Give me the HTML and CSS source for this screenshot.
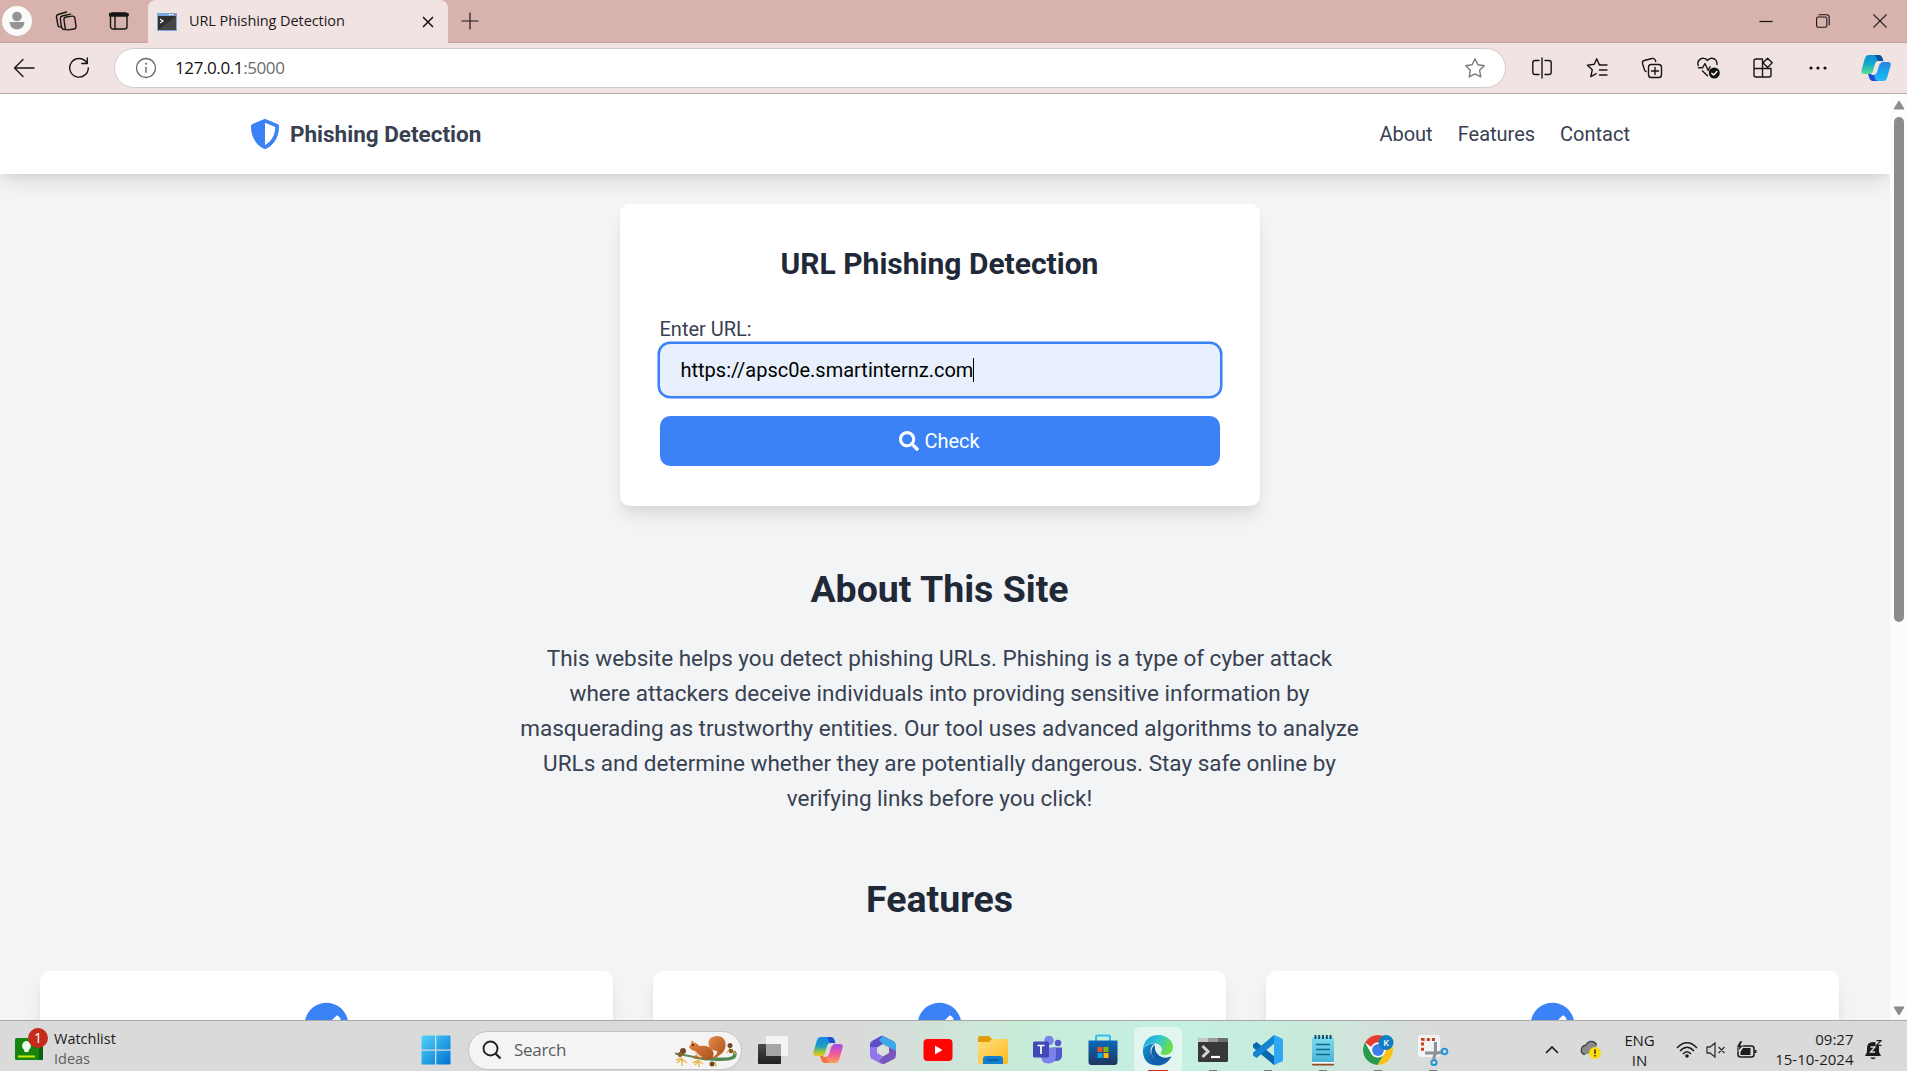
FILE: index.html
```html
<!DOCTYPE html>
<html lang="en">
<head>
<meta charset="utf-8">
<title>URL Phishing Detection</title>
<link rel="stylesheet" href="styles.css">
</head>
<body>
<svg class="defs" width="0" height="0" aria-hidden="true">
  <defs>
    <linearGradient id="win" x1="0" y1="0" x2="1" y2="1"><stop offset="0" stop-color="#4fd4fb"/><stop offset="1" stop-color="#0071d2"/></linearGradient>
    <linearGradient id="cpA" x1="0" y1="0" x2="0" y2="1"><stop offset="0" stop-color="#0b8fd6"/><stop offset=".45" stop-color="#12a9cc"/><stop offset="1" stop-color="#5be08c"/></linearGradient>
    <linearGradient id="cpB" x1="0" y1="0" x2="0" y2="1"><stop offset="0" stop-color="#2f7fe0"/><stop offset=".5" stop-color="#15a8f0"/><stop offset="1" stop-color="#22b8f5"/></linearGradient>
    <linearGradient id="cpC" x1="0" y1="0" x2="0" y2="1"><stop offset="0" stop-color="#1586e8"/><stop offset=".5" stop-color="#1f9fc0"/><stop offset=".75" stop-color="#8fc63e"/><stop offset="1" stop-color="#f5c51c"/></linearGradient>
    <linearGradient id="cpD" x1="0" y1="0" x2="0" y2="1"><stop offset="0" stop-color="#a34de8"/><stop offset=".5" stop-color="#ee5a9c"/><stop offset="1" stop-color="#fba04f"/></linearGradient>
    <linearGradient id="fold" x1="0" y1="0" x2="1" y2="1"><stop offset="0" stop-color="#ffdf7c"/><stop offset="1" stop-color="#fdbb22"/></linearGradient>
    <linearGradient id="store" x1="0" y1="0" x2="0" y2="1"><stop offset="0" stop-color="#0b69b8"/><stop offset="1" stop-color="#20355f"/></linearGradient>
    <linearGradient id="edgeA" x1="0" y1="0" x2="1" y2=".4"><stop offset="0" stop-color="#1d9de0"/><stop offset=".5" stop-color="#30c3d6"/><stop offset="1" stop-color="#6ae04c"/></linearGradient>
    <linearGradient id="edgeB" x1="0" y1="0" x2="1" y2="1"><stop offset="0" stop-color="#1592d9"/><stop offset="1" stop-color="#0c4f91"/></linearGradient>
    <linearGradient id="tv" x1="0" y1="0" x2="0" y2="1"><stop offset="0" stop-color="#4a4a48"/><stop offset="1" stop-color="#20201f"/></linearGradient>
    <linearGradient id="note" x1="0" y1="0" x2="0" y2="1"><stop offset="0" stop-color="#7fdcef"/><stop offset="1" stop-color="#45b3d8"/></linearGradient>
    <linearGradient id="sq" x1="0" y1="0" x2="1" y2="1"><stop offset="0" stop-color="#e78a48"/><stop offset="1" stop-color="#a94f1b"/></linearGradient>
    <symbol id="check-circle" viewBox="0 0 512 512"><path fill="currentColor" d="M504 256c0 136.967-111.033 248-248 248S8 392.967 8 256 119.033 8 256 8s248 111.033 248 248zM227.314 387.314l184-184c6.248-6.248 6.248-16.379 0-22.627l-22.627-22.627c-6.248-6.248-16.379-6.249-22.628 0L216 308.118l-70.059-70.059c-6.248-6.248-16.379-6.248-22.628 0l-22.627 22.627c-6.248 6.248-6.248 16.379 0 22.627l104 104c6.249 6.249 16.379 6.249 22.628.001z"/></symbol>
  </defs>
</svg>

<div class="screen">
  <!-- Tab strip -->
  <div class="tabstrip">
    <div class="slot avatar-slot"><svg width="30" height="30" viewBox="0 0 30 30"><circle cx="15" cy="15" r="15" fill="#fafafa"/><circle cx="15" cy="10.5" r="4.8" fill="#949494"/><path d="M8 16h14q.3 0 .3.600c0 4-3.200 6.900-7.300 6.900s-7.300-2.900-7.300-6.900q0-.6.300-.6z" fill="#949494"/></svg></div>
    <div class="slot workspaces"><svg class="line" width="24" height="24" viewBox="0 0 24 24"><rect x="10.500" y="7.500" width="11" height="13" rx="2.500" transform="rotate(-8 16 14)"/><path d="M7.500 18.500l-1.200-8.700q-.2-2.100 1.800-2.800l8.500-1.900M4 16.500L2.500 8.500Q2.200 6.300 4.200 5.500L12.500 3M11 20.500Q8.500 21 7.800 18.500M6 18Q4.500 18 4 16.500"/></svg></div>
    <div class="slot vtabs"><svg class="line" width="20" height="20" viewBox="0 0 20 20"><rect x="1.500" y="2" width="16.500" height="16" rx="2.500"/><path d="M1.500 3.800h16.500" stroke-width="4"/><path d="M6 4v14"/></svg></div>
    <div class="tab">
      <svg class="favicon" width="20" height="18" viewBox="0 0 20 18"><rect width="20" height="18" fill="#77a7de"/><rect x="1" y="3" width="18" height="14" fill="#2e2e2e"/><path d="M1 17L19 3v14z" fill="#444"/><path d="M3 6l3 2-3 2" stroke="#fff" stroke-width="1.200" fill="none"/><path d="M12 1.500h2M15 1.500h1" stroke="#fff"/><path d="M17 1.500h2" stroke="#d66"/></svg>
      <span class="tab-title">URL Phishing Detection</span>
      <svg class="tab-close" width="12" height="12" viewBox="0 0 12 12"><path d="M1 1l10 10M11 1L1 11" stroke="#111" stroke-width="1.500"/></svg>
    </div>
    <div class="slot newtab"><svg width="18" height="18" viewBox="0 0 18 18"><path d="M9 .5v17M.5 9h17" stroke="#1b1b1b" stroke-width="1.200"/></svg></div>
    <div class="window-controls">
      <div class="slot"><svg width="14" height="14" viewBox="0 0 14 14"><path d="M.5 7.500h13" stroke="#111" stroke-width="1.200"/></svg></div>
      <div class="slot"><svg class="line thin" width="14" height="14" viewBox="0 0 14 14"><rect x=".6" y="3" width="10.200" height="10.200" rx="1.500"/><path d="M3 .8h7.500q2.700 0 2.700 2.700v7.500"/></svg></div>
      <div class="slot"><svg width="14" height="14" viewBox="0 0 14 14"><path d="M.5.5l13 13M13.500.5l-13 13" stroke="#222" stroke-width="1.100"/></svg></div>
    </div>
  </div>

  <!-- Address bar -->
  <div class="toolbar">
    <div class="slot back"><svg class="line" width="22" height="20" viewBox="0 0 22 20"><path d="M21 10H1.500M10 1.500L1.500 10l8.500 8.500"/></svg></div>
    <div class="slot reload"><svg class="line" width="22" height="22" viewBox="0 0 22 22"><path d="M18.500 5.300A9.300 9.300 0 1 0 20.300 11M19.300 1v5.500h-5.500"/></svg></div>
    <div class="omnibox">
      <svg class="info" width="22" height="22" viewBox="0 0 22 22"><circle cx="11" cy="11" r="9.500" fill="none" stroke="#666" stroke-width="1.300"/><path d="M11 9.800v6" stroke="#666" stroke-width="1.400"/><circle cx="11" cy="6.800" r="1" fill="#666"/></svg>
      <span class="address">127.0.0.1<span class="port">:5000</span></span>
      <svg class="star" width="22" height="22" viewBox="0 0 22 22"><path d="M11 1.800l2.900 6 6.400.9-4.700 4.600 1.200 6.600-5.800-3.100-5.800 3.100 1.200-6.600L1.700 8.700l6.400-.9z" fill="none" stroke="#7b7b7b" stroke-width="1.400" stroke-linejoin="round"/></svg>
    </div>
    <div class="actions">
      <div class="slot"><svg class="line" width="22" height="22" viewBox="0 0 22 22"><path d="M8 3.500H4Q1.800 3.500 1.800 5.700v9.600Q1.800 17.500 4 17.500h4M14 3.500h4q2.200 0 2.200 2.200v9.600q0 2.200-2.200 2.200h-4M11 1v20"/></svg></div>
      <div class="slot"><svg class="line" width="22" height="22" viewBox="0 0 22 22"><path d="M14 7.800l-.8-.2L10.700 1.800 8.300 7.200l-6.900 1 4.900 4.500-1.500 7 5.400-3M13.500 8h7.500M13.500 13h7.500M13.500 18h7.500"/></svg></div>
      <div class="slot"><svg class="line" width="22" height="22" viewBox="0 0 22 22"><rect x="7.500" y="7.500" width="13" height="13" rx="2.800"/><path d="M14 10.500v7M10.500 14h7M5 14.500Q3.500 14 3.200 12L1.500 6.500Q1 4.200 3.200 3.500L11 1.500Q13.300 1 14.200 3l.5 1.500"/></svg></div>
      <div class="slot"><svg class="line" width="24" height="24" viewBox="0 0 24 24"><path d="M2.200 9.500C.8 5 4.500 1.800 7.700 2.300q2.200.2 3.800 2.200 1.800-2 3.800-2.200c4-.3 6.200 3 5.700 6.200M2.500 11.800h4L9 7.500l3.200 7 1.800-3.800M6.500 15l5 4.800"/><circle cx="18.300" cy="17" r="5.500" fill="#111" stroke="none"/><path d="M15.800 17.200l1.800 1.800 3.300-3.500" stroke="#fff"/></svg></div>
      <div class="slot"><svg class="line" width="22" height="22" viewBox="0 0 22 22"><path d="M10 2H4Q2 2 2 4v14q0 2 2 2h13q2 0 2-2v-6.500H2M10.500 2v18"/><path d="M15.600 1.200l4.600 4.600-4.600 4.600L11 5.800z"/></svg></div>
      <div class="slot"><svg width="18" height="6" viewBox="0 0 18 6"><g fill="#111"><circle cx="2" cy="3" r="1.600"/><circle cx="9" cy="3" r="1.600"/><circle cx="16" cy="3" r="1.600"/></g></svg></div>
      <div class="slot copilot"><svg width="30" height="28" viewBox="0 0 30 28"><path d="M8 1h9q3 0 4 3l1 3h-5q-2 0-3 3l-2 7q-1 3-4 3H3q-3.500 0-2.500-4L4 4q1-3 4-3z" fill="url(#cpA)"/><path d="M14 1h3.500q3 0 4 3l1 3h-5q-2-.5-2-3z" fill="#0c4f9c"/><path d="M22 8h5q3.500 0 2.500 4l-3.500 12q-1 3-4 3h-9q-3 0-4-4l4-3q1-.5 2-3l2-7q1-2 5-2z" fill="url(#cpB)"/><path d="M9 20q3 0 4-2.500 0 9.500 4 9.500h-5q-3 0-4-4l-1-3z" fill="#2049d8"/><path d="M20 8.500h-1q-3 0-4 3l-1.500 6q-.8 2.500-3 2.700h1.500q2.500 0 3.500-3l2-6.500q.5-1.800 2.500-2.200z" fill="#f1e3e2" stroke="#f1e3e2" stroke-width="1.500"/></svg></div>
    </div>
  </div>

  <!-- Web page -->
  <div class="viewport">
    <div class="page">
      <header class="site-header">
        <div class="container">
          <div class="brand"><svg width="30" height="30" viewBox="0 0 512 512"><path fill="#3b82f6" d="M466.500 83.700l-192-80a48.150 48.150 0 0 0-36.900 0l-192 80C27.700 91.100 16 108.600 16 128c0 198.500 114.500 335.700 221.500 380.300 11.800 4.900 25.100 4.900 36.900 0C360.100 472.600 496 349.300 496 128c0-19.400-11.700-36.900-29.500-44.300zM256.100 446.300l-.1-381 175.900 73.300c-3.300 151.400-82.100 261.100-175.800 307.700z"/></svg><span>Phishing Detection</span></div>
          <nav class="nav"><a>About</a><a>Features</a><a>Contact</a></nav>
        </div>
      </header>
      <main class="content">
        <section class="card">
          <h2 class="card-title">URL Phishing Detection</h2>
          <label class="label">Enter URL:</label>
          <div class="input"><span>https://apsc0e.smartinternz.com</span><i class="caret"></i></div>
          <button class="button"><svg width="20" height="20" viewBox="0 0 512 512"><path fill="currentColor" d="M505 442.700L405.300 343c-4.500-4.500-10.600-7-17-7H372c27.600-35.300 44-79.700 44-128C416 93.100 322.900 0 208 0S0 93.100 0 208s93.100 208 208 208c48.300 0 92.700-16.400 128-44v16.300c0 6.400 2.500 12.500 7 17l99.700 99.700c9.400 9.400 24.600 9.400 33.900 0l28.300-28.300c9.400-9.400 9.400-24.600.1-34zM208 336c-70.700 0-128-57.200-128-128 0-70.700 57.200-128 128-128 70.700 0 128 57.200 128 128 0 70.700-57.200 128-128 128z"/></svg><span>Check</span></button>
        </section>
        <section class="about">
          <h2 class="heading">About This Site</h2>
          <p class="lead">This website helps you detect phishing URLs. Phishing is a type of cyber attack<br>where attackers deceive individuals into providing sensitive information by<br>masquerading as trustworthy entities. Our tool uses advanced algorithms to analyze<br>URLs and determine whether they are potentially dangerous. Stay safe online by<br>verifying links before you click!</p>
        </section>
        <section class="features">
          <h2 class="heading">Features</h2>
          <div class="feature-grid">
            <div class="feature"><svg width="45" height="45"><use href="#check-circle"/></svg></div>
            <div class="feature"><svg width="45" height="45"><use href="#check-circle"/></svg></div>
            <div class="feature"><svg width="45" height="45"><use href="#check-circle"/></svg></div>
          </div>
        </section>
      </main>
    </div>
    <div class="scrollbar">
      <svg width="12" height="10" viewBox="0 0 12 10"><path d="M6 1l5 8H1z" fill="#8b8b8b" stroke="#8b8b8b" stroke-linejoin="round"/></svg>
      <div class="thumb"></div>
      <svg class="down" width="12" height="10" viewBox="0 0 12 10"><path d="M6 9l5-8H1z" fill="#8b8b8b" stroke="#8b8b8b" stroke-linejoin="round"/></svg>
    </div>
  </div>

  <!-- Taskbar -->
  <div class="taskbar">
    <div class="widget">
      <svg width="34" height="34" viewBox="0 0 34 34"><path d="M24 11h4q1 0 1 1v19q0 1-1 1h-4z" fill="#0b5f12"/><rect x="1" y="10" width="24" height="22" rx="1.500" fill="#16840f"/><path d="M12.500 13a4.800 4.800 0 0 1 2.600 8.500q-.6.700-.6 2.500h-4q0-1.800-.6-2.500A4.800 4.800 0 0 1 12.500 13z" fill="#eaffea"/><path d="M4 28.500h17" stroke="#c9e800" stroke-width="2"/><circle cx="24" cy="10" r="10" fill="#c42b1c"/><text x="24" y="15.200" text-anchor="middle" class="badge">1</text></svg>
      <div class="widget-text"><span>Watchlist</span><span class="sub">Ideas</span></div>
    </div>
    <div class="start"><svg width="30" height="30" viewBox="0 0 30 30"><path fill="url(#win)" d="M1.500.5H14v14H.5v-13q0-1 1-1zM15.300.5h13.200q1 0 1 1v13H15.300zM.5 15.700H14v13.800H1.500q-1 0-1-1zM15.300 15.700h14.200v12.800q0 1-1 1H15.300z"/></svg></div>
    <div class="search">
      <svg width="20" height="20" viewBox="0 0 20 20"><circle cx="8.500" cy="8.500" r="7" fill="none" stroke="#222" stroke-width="1.900"/><path d="M13.500 13.500l5 5" stroke="#222" stroke-width="2.300"/></svg>
      <span>Search</span>
      <svg class="squirrel" width="64" height="34" viewBox="0 0 64 34">
        <path d="M1 19.500q12 2 24 4.500" fill="none" stroke="#5b8a50" stroke-width="2"/>
        <path d="M22 23q8 2 18 2 14 1 19-1.500 3-2 1.500-5" fill="none" stroke="#4f8a52" stroke-width="3.500" stroke-linecap="round"/>
        <g stroke="#e5b84e" stroke-width="1.400"><path d="M8 24l-6 2M8 25l-5 4M8 25v7M8 25l5 4M25 26l-6 3M25 27l-4 4M25 27v6M25 27l4 3M41 28l-4 3M41 28l1 5M56 15l6 5M56 14l-3 5"/></g>
        <circle cx="9" cy="17" r="3" fill="#70482c"/><circle cx="6" cy="20.500" r="2.500" fill="#8c5b38"/><circle cx="56" cy="11.500" r="2.500" fill="#70482c"/><circle cx="57" cy="17" r="2.300" fill="#8c5b38"/><circle cx="38" cy="30" r="2.500" fill="#70482c"/>
        <path d="M37 24q7-3 6-7-8-1-8.500-7Q34 3 42 2q8-.5 9.500 7 .8 7-4.500 11-4 4-9 5z" fill="url(#sq)"/>
        <path d="M15 13l2.200-4 .8-3 2 2.500q4 1 5 3.500 6-1 10 1 5 3 4.500 8-1 4-5 4.500h-5.500l-1-2-4 .5-5 .500.500-2 3-.5q-1-3-1-5-4 0-6.500-4z" fill="url(#sq)"/><path d="M21.500 17q3 4 7 6l-3 .5-3-2z" fill="#f6d2b4"/><circle cx="19" cy="11" r=".9" fill="#111"/>
      </svg>
    </div>
    <div class="apps">
      <div class="app"><svg width="34" height="32" viewBox="0 0 34 32"><rect x="2" y="10" width="23" height="20" rx="1" fill="url(#tv)"/><rect x="10" y="2" width="22" height="20" rx="1" fill="#fff" opacity=".7"/><path d="M10 10h15v12H10z" fill="#999" opacity=".7"/></svg></div>
      <div class="app"><svg width="30" height="28" viewBox="0 0 30 28"><path d="M8 1h9q3 0 4 3l1 3h-5q-2 0-3 3l-2 7q-1 3-4 3H3q-3.500 0-2.500-4L4 4q1-3 4-3z" fill="url(#cpC)"/><path d="M14 1h3.500q3 0 4 3l1 3h-5q-2-.5-2-3z" fill="#1b4fd0"/><path d="M22 8h5q3.500 0 2.500 4l-3.500 12q-1 3-4 3h-9q-3 0-4-4l4-3q1-.5 2-3l2-7q1-2 5-2z" fill="url(#cpD)"/><path d="M9 20q3 0 4-2.500 0 9.500 4 9.500h-5q-3 0-4-4l-1-3z" fill="#f4743b"/><path d="M20 8.500h-1q-3 0-4 3l-1.500 6q-.8 2.500-3 2.700h1.500q2.500 0 3.500-3l2-6.500q.5-1.800 2.500-2.200z" fill="#dadbda" stroke="#dadbda" stroke-width="1.500"/></svg></div>
      <div class="app"><svg width="28" height="30" viewBox="0 0 28 30"><path d="M14 1L26 7l-6 5-6-3-6 3.500V19L1 14V9.500Q1 7 3 6L11 1.500q1.500-1 3-.5z" fill="#5a4fc9"/><path d="M14 1l11 5.500Q27 8 27 10v11l-7-4v-5l-6-3-4-4z" fill="#39a9e8"/><path d="M27 16v4q0 3-2 4l-9 4.500q-2 1-4 0l-4-2 6-5 6-3.500V12z" fill="#7a55bd"/><path d="M1 12v8q0 3 2 4l9 4.500q1 .5 3 .5l-6-4 5-3.500L8 18v-6z" fill="#9276ee"/><circle cx="14" cy="15" r="4.500" fill="#dbdedb"/></svg></div>
      <div class="app"><svg width="30" height="24" viewBox="0 0 30 24"><rect x=".5" y="1" width="29" height="22" rx="4" fill="#fb0505"/><path d="M12 7.500v9l7.500-4.500z" fill="#fff"/></svg></div>
      <div class="app"><svg width="30" height="30" viewBox="0 0 30 30"><path d="M0 3q0-2 2-2h9l3 3v6H0z" fill="#e09c0b"/><path d="M0 7h11l3-3h15q1 0 1 1v23q0 1-1 1H0z" fill="url(#fold)"/><path d="M5 29v-5q0-3 3-3h14q3 0 3 3v5z" fill="#1180d0"/><path d="M9 25h12" stroke="#0b4f88" stroke-width="1.300"/></svg></div>
      <div class="app"><svg width="32" height="30" viewBox="0 0 32 30"><circle cx="26" cy="8" r="3.200" fill="#5059c9"/><circle cx="17" cy="5.500" r="4.800" fill="#7b83eb"/><path d="M21 12.500h9v9q-2 6-9 4z" fill="#5059c9"/><path d="M9 12.500h15v8q0 8-7.500 8T9 21z" fill="#7b83eb"/><rect x="1" y="6.500" width="16" height="16" rx="1.500" fill="#4149b5"/><path d="M5.500 10.500h7M9 10.500v8.500" stroke="#fff" stroke-width="1.700"/></svg></div>
      <div class="app"><svg width="30" height="32" viewBox="0 0 30 32"><path d="M8 7V3q0-1.500 1.500-1.500h11Q22 1.500 22 3v4" fill="none" stroke="#35c0ee" stroke-width="2"/><path d="M.5 6.500h29V28q0 3-3 3h-23q-3 0-3-3z" fill="url(#store)"/><path d="M9.500 13h5v5h-5z" fill="#f25022"/><path d="M15.500 13h5v5h-5z" fill="#7fba00"/><path d="M9.500 19h5v5h-5z" fill="#00a4ef"/><path d="M15.500 19h5v5h-5z" fill="#ffb900"/></svg></div>
      <div class="app active"><svg width="32" height="32" viewBox="0 0 32 32"><path d="M1 15C2 6 8 1 16 1c9 0 15 6 15 12 0 5-4 8-8 8-3 0-5-1-4-2.500 2-2.500 1-8-5-9C8 8.500 3 11 1 15z" fill="url(#edgeA)"/><path d="M1 15q4-6 12-5.500-5 3-4.500 9Q9 27 18 31 3 33 1 19z" fill="url(#edgeB)"/><path d="M13 11q-5 3-3 10 3 7 11 7 5-.5 8-4.500 1-1.500-1-.7-6 2.500-11-1.300-5-4-4-10.500z" fill="#0f5ea8"/><path d="M13 31q9 2 15-6-9 5-16-1-3-3-3-8-2 11 4 15z" fill="#155fae"/></svg></div>
      <div class="app open"><svg width="30" height="26" viewBox="0 0 30 26"><rect y="1" width="30" height="24" rx="1.500" fill="#383838"/><path d="M0 5V2.500Q0 1 1.500 1H10v4z" fill="#c7c7c7"/><path d="M10 1h10v4H10z" fill="#9a9a9a"/><path d="M20 1h8.500Q30 1 30 2.500V5H20z" fill="#6d6d6d"/><path d="M4.500 9l5.500 5.500L4.500 20" fill="none" stroke="#d2d2d2" stroke-width="3"/><path d="M13 20h9" stroke="#fff" stroke-width="2.200"/></svg></div>
      <div class="app open"><svg width="30" height="32" viewBox="0 0 30 32"><path d="M22 23L3.500 8 0 10.500v3L21 31l3-2z" fill="#0a68ae"/><path d="M22 9L3.500 24 0 21.500v-3L21 1l3 2z" fill="#1685d1"/><path d="M21 1l8 3.500q1 .5 1 1.500v20q0 1-1 1.500L21 31z" fill="#2da8f4"/></svg></div>
      <div class="app open"><svg width="24" height="32" viewBox="0 0 24 32"><rect x="1" y="3" width="22" height="26" rx="1.500" fill="url(#note)"/><path d="M1 29.500h22v1q0 1-1 1H2q-1 0-1-1z" fill="#8e4a20"/><path d="M1 28h22v1.500H1z" fill="#fff"/><path d="M5 15.500h14M5 20.500h14M5 10.500h14" stroke="#0d6a8c" stroke-width="1.700"/><path d="M4.500 1v4M8.200 1v4M12 1v4M15.800 1v4M19.500 1v4" stroke="#174f66" stroke-width="2"/></svg></div>
      <div class="app open"><svg width="32" height="32" viewBox="0 0 32 32"><circle cx="16" cy="16" r="15" fill="#fff"/><path d="M3 8.500A15 15 0 0 1 29 8.500H16a7.500 7.500 0 0 0-6.700 4.500z" fill="#e43e2f"/><path d="M29 8.500A15 15 0 0 1 15.500 31L22.500 19.500a7.500 7.500 0 0 0 0-7.500V8.500z" fill="#fbc116"/><path d="M3 8.500A15 15 0 0 0 15.500 31l7-11.500A7.500 7.500 0 0 1 9.500 20z" fill="#2a9a4b"/><circle cx="16" cy="16" r="7.200" fill="#fff"/><circle cx="16" cy="16" r="5.900" fill="#3f7eea"/><circle cx="24" cy="8.500" r="7.500" fill="#0e7fc1"/><text x="24" y="12" text-anchor="middle" class="initial">K</text></svg></div>
      <div class="app open"><svg width="32" height="32" viewBox="0 0 32 32"><rect x="1" y="1" width="22" height="22" rx="2.500" fill="#f3f3f6"/><path d="M18 5.500H5.500V18" fill="none" stroke="#d03d14" stroke-width="3" stroke-dasharray="3 2.200"/><path d="M18.500 8v11l-2 6M8 19h13l5-1.500" fill="none" stroke="#8a929a" stroke-width="3"/><circle cx="27.500" cy="17.500" r="2.800" fill="none" stroke="#2496d8" stroke-width="2"/><circle cx="17" cy="28.500" r="2.600" fill="none" stroke="#2496d8" stroke-width="2"/></svg></div>
    </div>
    <div class="tray">
      <svg class="chev" width="14" height="8" viewBox="0 0 14 8"><path d="M1 7l6-6 6 6" fill="none" stroke="#1c1c1c" stroke-width="1.700"/></svg>
      <svg class="cloud" width="22" height="20" viewBox="0 0 22 20"><path d="M3 14Q0 11 2 7.500 3.500 5 6 5q2-4 6-3.500Q16 2 17 6l-3 3-6 5z" fill="#8a8a8a"/><path d="M5 14.500Q1 14 1.300 10T6 5q2-4 6-3.500 3.500.5 4.500 3.500" fill="none" stroke="#444" stroke-width="1.300"/><circle cx="15" cy="13" r="6" fill="#fbdc0c"/><path d="M15 9.500v4.300M15 15v1.500" stroke="#222" stroke-width="1.500"/></svg>
      <div class="lang"><span>ENG</span><span>IN</span></div>
      <svg class="wifi" width="22" height="18" viewBox="0 0 22 18"><g fill="none" stroke="#1c1c1c" stroke-width="1.500"><path d="M1 7Q11-3.500 21 7M4 10q7-7.500 14 0M7 13q4-4.500 8 0"/></g><circle cx="11" cy="15" r="1.800" fill="#1c1c1c"/></svg>
      <svg class="vol" width="20" height="16" viewBox="0 0 20 16"><path d="M1 5h3l5-4v14l-5-4H1zM12.500 5l6 6M18.500 5l-6 6" fill="none" stroke="#333" stroke-width="1.300"/></svg>
      <svg class="bat" width="22" height="18" viewBox="0 0 22 18"><rect x="2" y="5" width="16" height="11" rx="2.500" fill="none" stroke="#1c1c1c" stroke-width="1.500"/><path d="M19.500 9v3" stroke="#1c1c1c" stroke-width="2"/><path d="M7 7h7.500v7H4.500v-3z" fill="#1c1c1c"/><path d="M4 0L.5 6H3L2 10.500 7 4.500H4.500L6.500 0z" fill="#1c1c1c" stroke="#dadada" stroke-width=".5"/></svg>
      <div class="clock"><span>09:27</span><span>15-10-2024</span></div>
      <svg class="bell" width="18" height="20" viewBox="0 0 18 20"><path d="M3 8q0-6 6-6t6 5.500V12l2 4H1l2-4z" fill="#1c1c1c"/><path d="M6 17.500h6q-3 3.500-6 0z" fill="#1c1c1c"/><path d="M6.500 7h4.500l-4.500 5H11" fill="none" stroke="#dadada" stroke-width="1.300"/><path d="M11.500 0H18v6h-6.500z" fill="#dadada"/><path d="M12.500.7h4.500l-4.500 4.600h5" fill="none" stroke="#1c1c1c" stroke-width="1.200"/></svg>
    </div>
  </div>
</div>
</body>
</html>
```

FILE: styles.css
```css
* { box-sizing: border-box; margin: 0; padding: 0; }
html, body { width: 1907px; height: 1071px; overflow: hidden; }
body { font-family: "Open Sans", "Noto Sans", sans-serif; }
svg { display: block; flex: none; }
.defs { position: absolute; }
.screen { display: flex; flex-direction: column; width: 1907px; height: 1071px; }
.slot { display: flex; align-items: center; justify-content: center; flex: none; }
.line { fill: none; stroke: #161616; stroke-width: 1.400; stroke-linecap: round; stroke-linejoin: round; }
.thin { stroke-width: 1.100; }

.tabstrip { display: flex; flex: none; height: 43px; background: #d8b3ad; box-shadow: inset 0 -1px 1px #cba29d; }
.avatar-slot { width: 34px; }
.workspaces { width: 64px; }
.vtabs { width: 42px; margin-right: 8px; }
.tabstrip > .slot { height: 42px; }
.tab { display: flex; align-items: center; width: 300px; height: 43px; padding: 0 14px 0 9px; background: #f1e3e2; border-radius: 8px 8px 0 0; }
.favicon { margin-right: 12px; }
.tab-title { flex: 1; font-size: 14.500px; line-height: 20px; letter-spacing: -.08px; color: #1a1a1a; white-space: nowrap; padding-bottom: 2px; }
.newtab { width: 43px; }
.window-controls { display: flex; height: 42px; margin-left: auto; margin-right: -1px; }
.window-controls .slot { width: 57px; }

.toolbar { display: flex; align-items: center; flex: none; height: 51px; background: #f1e3e2; border-bottom: 1px solid #b9abab; }
.back { width: 48px; }
.reload { width: 62px; }
.omnibox { display: flex; align-items: center; width: 1392px; height: 40px; margin: 0 8px 0 4px; padding: 0 19px 0 20px; background: #fff; border: 1px solid #d3cdcd; border-radius: 20px; }
.address { flex: 1; margin-left: 18px; font-size: 17px; line-height: 24px; letter-spacing: -.4px; color: #111; }
.port { color: #6b6b6b; }
.actions { display: flex; flex: 1; align-items: center; }
.actions .slot { width: 55.300px; }
.actions .copilot { width: 60px; }

.viewport { display: flex; flex: none; height: 926px; overflow: hidden; }
.page { width: 1890px; height: 926px; overflow: hidden; background: #f3f4f6; font-family: Roboto, sans-serif; font-size: 20px; line-height: 30px; color: #374151; }
.site-header { position: relative; width: 1890px; height: 80px; background: #fff; box-shadow: 0 12px 19px -4px rgba(0,0,0,.1), 0 5px 7px -2px rgba(0,0,0,.05); }
.container { display: flex; justify-content: space-between; align-items: center; width: 1380px; height: 80px; margin-left: 250px; }
.brand { display: flex; align-items: center; gap: 10px; font-size: 22.500px; font-weight: 700; }
.nav { display: flex; gap: 25px; }
.content { width: 1879px; padding: 30px 39.500px 0; }
.card { width: 640px; height: 302px; margin: 0 auto; padding: 40px; background: #fff; border-radius: 10px; box-shadow: 0 12px 19px -4px rgba(0,0,0,.1), 0 5px 7px -2px rgba(0,0,0,.05); }
.card-title { margin-bottom: 30px; font-size: 30px; line-height: 40px; color: #1f2937; text-align: center; }
.label { display: block; height: 30px; }
.input { display: flex; align-items: center; height: 52px; padding: 0 21px; background: #e8f0fe; border-radius: 10px; box-shadow: 0 0 0 2.500px #3b82f6; color: #000; }
.caret { width: 1px; height: 24px; background: #000; }
.button { display: flex; align-items: center; justify-content: center; gap: 5px; width: 100%; height: 50px; margin-top: 20px; border: 0; border-radius: 10px; background: #3b82f6; color: #fff; font: 400 20px/30px Roboto, sans-serif; }
.heading { font-size: 37.500px; line-height: 45px; color: #1f2937; text-align: center; }
.about { margin-top: 61px; }
.lead { margin-top: 29px; font-size: 22.500px; line-height: 35px; text-align: center; white-space: nowrap; }
.features { margin-top: 61px; }
.feature-grid { display: grid; grid-template-columns: repeat(3, 1fr); gap: 40px; margin-top: 49px; }
.feature { display: flex; justify-content: center; height: 260px; padding-top: 31px; background: #fff; border-radius: 10px; color: #3b82f6; box-shadow: 0 12px 19px -4px rgba(0,0,0,.1), 0 5px 7px -2px rgba(0,0,0,.05); }
.scrollbar { display: flex; flex-direction: column; align-items: center; width: 17px; height: 926px; padding: 6px 0 4px 1px; background: #fcfcfc; }
.thumb { width: 10px; height: 505px; margin-top: 7px; border-radius: 5px; background: #8b8b8b; }
.down { margin-top: auto; }

.taskbar { display: flex; align-items: center; flex: none; height: 51px; border-top: 1px solid #a9a9a9; color: #1c1c1c; font-size: 15px; line-height: 20px; background: linear-gradient(90deg, #dadada 850px, #c8ebd8 1020px, #c4f0e3 1180px, #c9eadb 1300px, #dadada 1440px); }
.widget { display: flex; align-items: flex-start; width: 406px; height: 50px; padding: 7px 0 0 14px; }
.widget-text { display: flex; flex-direction: column; margin: 1px 0 0 6px; font-size: 14.500px; }
.sub { color: #5f5f5f; }
.badge { font: 14px "Open Sans", sans-serif; fill: #fff; }
.initial { font: 600 9px "Open Sans", sans-serif; fill: #fff; }
.start { display: flex; justify-content: center; width: 60px; height: 50px; padding-top: 14px; }
.search { display: flex; align-items: center; width: 274px; height: 39px; margin: 9px 3px 0 2px; padding: 0 3px 2px 13px; border: 1px solid #c2c2c2; border-radius: 20px; background: #f4f4f4; }
.search span { flex: 1; margin-left: 12px; font-size: 17px; letter-spacing: -.3px; color: #5c5c5c; }
.squirrel { margin-top: 2px; }
.apps { display: flex; height: 50px; }
.app { position: relative; display: flex; align-items: center; justify-content: center; width: 55px; height: 50px; padding-top: 7px; }
.active::before { content: ""; position: absolute; left: 4px; top: 6px; width: 48px; height: 46px; border-radius: 6px; background: #e2f6ef; }
.active svg { position: relative; }
.active::after, .open::after { content: ""; position: absolute; bottom: 0; left: 24px; width: 8px; height: 1px; background: #777; }
.active::after { left: 18px; width: 20px; background: #d8281e; }
.tray { display: flex; align-items: center; flex: 1; height: 50px; padding-top: 7px; }
.chev { margin-left: 84.500px; }
.cloud { margin-left: 21px; }
.lang { display: flex; flex-direction: column; align-items: center; width: 56px; margin-left: 10px; letter-spacing: -.1px; }
.wifi { margin-left: 8px; }
.vol { margin-left: 8px; }
.bat { margin-left: 10px; }
.clock { display: flex; flex-direction: column; align-items: flex-end; width: 90px; margin: -2px 0 0 6px; letter-spacing: 0; }
.bell { margin-left: 10px; }
```
